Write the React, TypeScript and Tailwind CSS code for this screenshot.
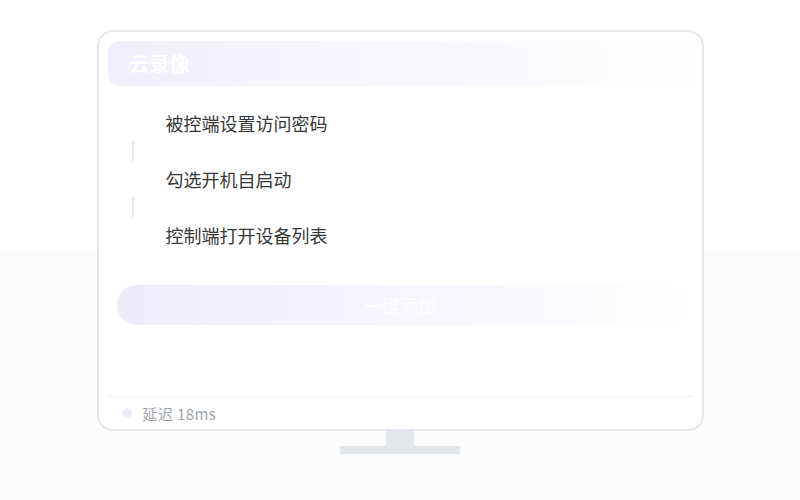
import React from 'react';

const steps = ['被控端设置访问密码', '勾选开机自启动', '控制端打开设备列表'];

export default function App() {
  return (
    <div
      className="w-[800px] h-[500px] overflow-hidden bg-linear-to-b from-white from-50% to-[#fcfcfd] to-50%"
      style={{ fontFamily: '"Noto Sans CJK SC", "Noto Sans", sans-serif' }}
    >
      <div className="flex flex-col items-center pt-[30px]">
        {/* monitor */}
        <div className="w-[607px] h-[401px] rounded-[16px] border-2 border-[#e4e7ec] bg-white p-[9px] flex flex-col">
          {/* header */}
          <div className="h-[45px] shrink-0 rounded-[12px] bg-linear-to-r from-[#f1eefd] via-[#f8f7fe] to-white flex items-center justify-between pl-[22px] pr-[22px]">
            <span className="text-[20px] font-bold text-white leading-none">云录像</span>
            <span className="text-[13px] text-white leading-none">在线</span>
          </div>

          {/* steps */}
          <div className="mt-[23px] flex flex-col">
            {steps.map((s, i) => (
              <React.Fragment key={s}>
                {i > 0 && (
                  <div className="h-[28px] flex items-center pl-[15px]">
                    <div className="w-[20px] flex justify-center">
                      <div className="w-[2px] h-[20px] bg-[#e6e8ec]" />
                    </div>
                  </div>
                )}
                <div className="h-[28px] flex items-center pl-[15px]">
                  <div className="w-[20px]" />
                  <span className="ml-[23px] text-[18px] text-[#383838] leading-none">{s}</span>
                </div>
              </React.Fragment>
            ))}
          </div>

          {/* button */}
          <div className="mt-[36px] mx-[9px] h-[40px] rounded-full bg-linear-to-r from-[#efebfd] via-[#f7f5fe] to-white flex items-center justify-center">
            <span className="text-[18px] text-white leading-none">一键添加</span>
          </div>

          <div className="flex-1" />

          {/* footer */}
          <div className="border-t border-[#eef0f3] h-[33px] -mb-[9px] flex items-center pl-[14px]">
            <span className="w-[10px] h-[10px] rounded-full bg-[#efebfd]" />
            <span className="ml-[11px] text-[15px] tracking-[0.4px] text-[#a0a4ab] leading-none">延迟 18ms</span>
          </div>
        </div>

        {/* stand */}
        <div className="w-[28px] h-[16px] bg-[#e2e6ea] -mt-px" />
        <div className="w-[120px] h-[8px] bg-[#e2e6ea]" />
      </div>
    </div>
  );
}
